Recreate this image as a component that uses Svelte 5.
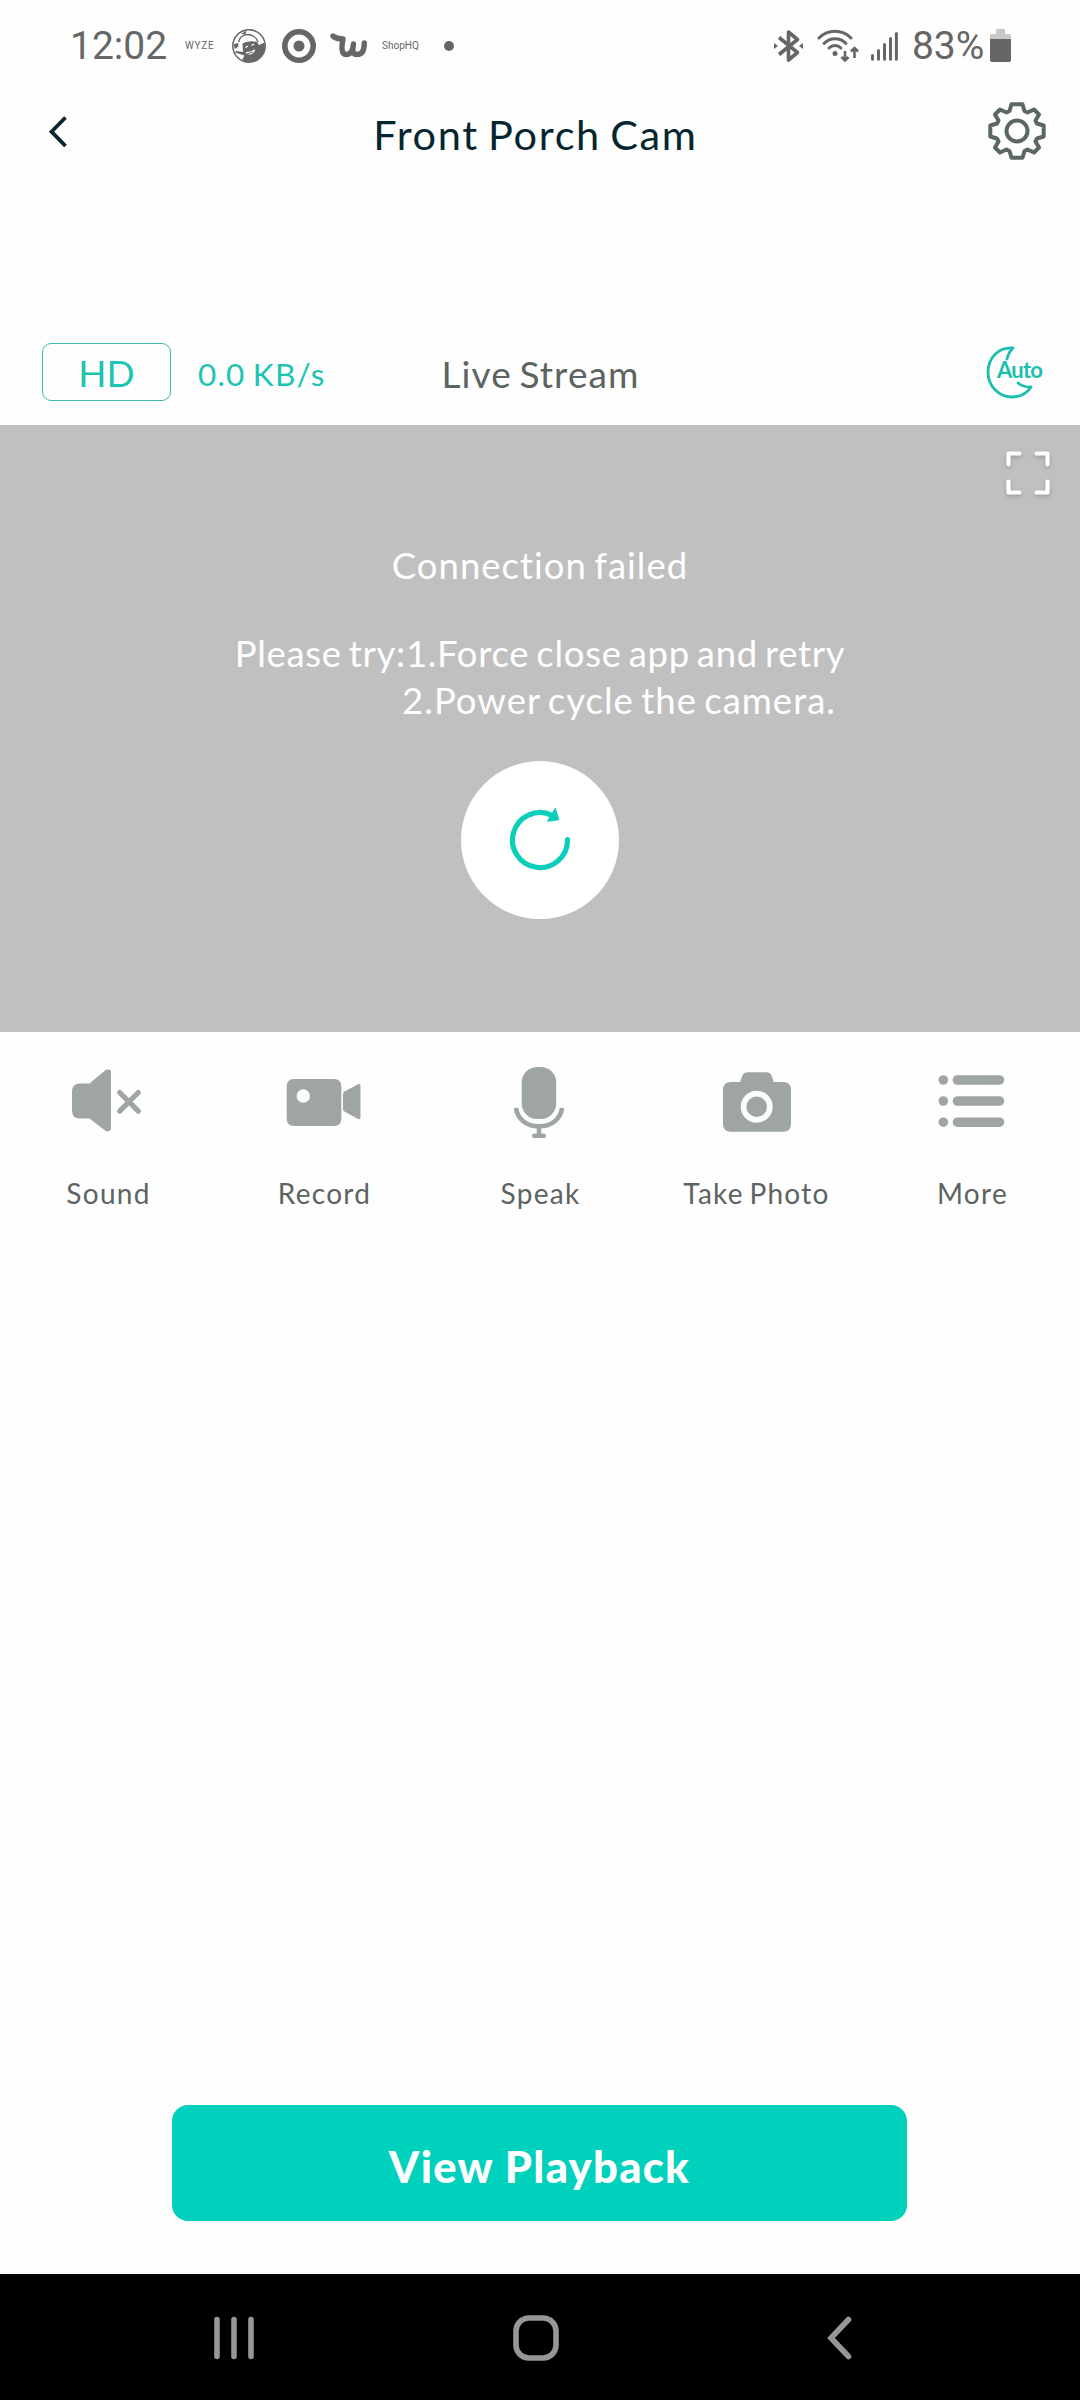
<script lang="ts">
	const title = 'Front Porch Cam';
	const speed = '0.0 KB/s';
	const battery = 83;

	const actions = [
		{ id: 'sound', label: 'Sound' },
		{ id: 'record', label: 'Record' },
		{ id: 'speak', label: 'Speak' },
		{ id: 'photo', label: 'Take Photo' },
		{ id: 'more', label: 'More' }
	];
</script>

<div class="screen">
	<div class="status-bar">
		<span class="clock">12:02</span>
		<span class="wyze">WYZE</span>
		<svg class="avatar" width="34" height="34" viewBox="0 0 34 34">
			<circle cx="17" cy="17" r="16.2" fill="none" stroke="#666" stroke-width="1.5" />
			<path d="M6.5 13C8 6 16 3.5 22 7.5C24.5 9 25.5 11 26 13" fill="none" stroke="#666" stroke-width="1.4" />
			<path d="M9 5L14.5 1.5L13.5 5.5ZM2 15L6 14L6.5 17.5L2.5 20Z" fill="#666" />
			<path d="M10.5 14.5C15 12 21 11.5 25 13L27 16L32.5 13.5L33 18C32 27 25 33 17 33C14 33 12 32 10 31L12.5 26.5L3 23.5L4 22L11 23Z" fill="#666" />
			<path d="M13.5 18.5L16 17M19.5 16.5L22 15" stroke="#fff" stroke-width="1.4" />
			<path d="M13.5 23C17 23.5 20 22 23 20C23 25 16 28 13.5 23Z" fill="#fff" />
			<path d="M15 25L21 23" stroke="#666" stroke-width="1" />
		</svg>
		<svg class="target" width="34" height="34" viewBox="0 0 34 34">
			<circle cx="17" cy="17" r="14.2" fill="none" stroke="#666" stroke-width="5.6" />
			<circle cx="17" cy="17" r="5.5" fill="#666" />
		</svg>
		<svg class="wish" width="38" height="26" viewBox="0 0 38 26">
			<path d="M3 3C6 6 9 5.5 13 6C11.5 13 11 21.5 16 21.5C21 21.5 23 17 23.5 11C22 18 23 21.5 27 21.5C32 21.5 34.3 17 34.3 10" fill="none" stroke="#666" stroke-width="5.4" stroke-linecap="round" stroke-linejoin="round" />
		</svg>
		<span class="shophq">ShopHQ</span>
		<span class="dot"></span>

		<div class="system">
			<svg class="bluetooth" width="30" height="34" viewBox="0 0 30 34">
				<path d="M5 8.5L23.5 23.5L14.5 31V3L23.5 10.5L5 25.5" fill="none" stroke="#666" stroke-width="3.6" stroke-linejoin="round" />
				<path d="M0 14L4 17L0 20ZM29 14L25 17L29 20Z" fill="#666" />
			</svg>
			<svg class="wifi" width="42" height="34" viewBox="0 0 42 34">
				<g fill="none" stroke="#666" stroke-width="3" stroke-linecap="round">
					<path d="M2 9C11 0 25 0 34 9" />
					<path d="M7 14.5C13 8 23 8 29 14.5" />
					<path d="M12 19C15.5 15.5 20.5 15.5 24 19" />
				</g>
				<circle cx="18" cy="24.5" r="2.5" fill="#666" />
				<path d="M28 22V31M24.5 28L28 31.5L31.5 28M37.5 29V20M34 22.5L37.5 19L41 22.5" fill="none" stroke="#666" stroke-width="2.6" />
			</svg>
			<svg class="signal" width="27" height="30" viewBox="0 0 27 30">
				<path d="M1.5 28.3V24.5M7.5 28.3V19.5M13.5 28.3V13.5M19.5 28.3V7.5M25.4 28.3V2.5" stroke="#666" stroke-width="3" stroke-linecap="round" />
			</svg>
			<span class="percent">{battery}%</span>
			<svg class="battery" width="21" height="33" viewBox="0 0 21 33">
				<path d="M6 0H15V5H19.5Q21 5 21 6.5V12H0V6.5Q0 5 1.5 5H6Z" fill="#c8c8c8" />
				<path d="M0 10H21V31Q21 33 19 33H2Q0 33 0 31Z" fill="#666" />
			</svg>
		</div>
	</div>

	<header>
		<button class="icon-button" aria-label="Back">
			<svg width="22" height="34" viewBox="0 0 22 34">
				<path d="M17.5 2.5L3.5 16.7L17.5 31" fill="none" stroke="#06262f" stroke-width="3.8" />
			</svg>
		</button>
		<h1>{title}</h1>
		<button class="icon-button" aria-label="Settings">
			<svg width="60" height="60" viewBox="-30 -30 60 60">
				<g fill="none" stroke="#5b6666" stroke-width="4" stroke-linejoin="round">
					<path d="M-5.5 -26.7H5.5L7.5 -20L10.5 -18.5L17 -21.5L22 -16.5L18.5 -10.5L20 -7.5L26.7 -5.5V5.5L20 7.5L18.5 10.5L22 16.5L17 21.5L10.5 18.5L7.5 20L5.5 26.7H-5.5L-7.5 20L-10.5 18.5L-17 21.5L-22 16.5L-18.5 10.5L-20 7.5L-26.7 5.5V-5.5L-20 -7.5L-18.5 -10.5L-22 -16.5L-17 -21.5L-10.5 -18.5L-7.5 -20Z" />
					<circle r="10.5" />
				</g>
			</svg>
		</button>
	</header>

	<div class="stream-bar">
		<div class="quality">
			<button class="hd">HD</button>
			<span class="speed">{speed}</span>
		</div>
		<span class="stream-title">Live Stream</span>
		<svg class="night" width="60" height="56" viewBox="0 0 60 56">
			<path d="M22 15C23 10.5 25 7 28 4C13 3 3 14 3 28.5C3 42 14 53 26.5 53C35 53 42 49 46 43C41 43.5 37 42 33 39" fill="none" stroke="#1cbfae" stroke-width="2.8" stroke-linecap="round" stroke-linejoin="round" />
			<text x="12" y="34" textLength="46">Auto</text>
		</svg>
	</div>

	<section class="video">
		<svg class="fullscreen" width="48" height="48" viewBox="0 0 48 48">
			<path d="M4.5 15.5V4.5H15.5M32.5 4.5H43.5V15.5M43.5 32.5V43.5H32.5M15.5 43.5H4.5V32.5" fill="none" stroke="#fff" stroke-width="4.2" stroke-linecap="round" stroke-linejoin="round" />
		</svg>
		<p class="failed">Connection failed</p>
		<p class="hint">Please try:1.Force close app and retry</p>
		<p class="hint second">2.Power cycle the camera.</p>
		<button class="retry" aria-label="Retry">
			<svg width="66" height="66" viewBox="-33 -33 66 66">
				<path d="M27.5 -0.5A27.5 27.5 0 1 1 12 -24.7" fill="none" stroke="#0bcfba" stroke-width="5.2" stroke-linecap="round" />
				<path d="M15.2 -31L18.5 -20.5L8 -19Z" fill="#0bcfba" stroke="#0bcfba" stroke-width="1.5" stroke-linejoin="round" />
			</svg>
		</button>
	</section>

	<nav class="actions">
		{#each actions as action (action.id)}
			<button class="action">
				<svg width="80" height="76" viewBox="0 0 80 76" fill="#9fa5a3">
					{#if action.id === 'sound'}
						<path d="M12 21.5H21.5L37 8.500Q39.5 6.5 43 8.5V67.5Q40 71 37 68.5L21.5 56.5H12Q4 56.5 4 48.5V29.5Q4 21.5 12 21.5Z" />
						<path d="M51.7 30.5L70.3 49.1M70.3 30.5L51.7 49.1" stroke="#9fa5a3" stroke-width="5.2" stroke-linecap="round" />
					{:else if action.id === 'record'}
						<path fill-rule="evenodd" d="M10 17H50Q57.3 17 57.3 24.5V56.5Q57.3 64 50 64H10Q2.7 64 2.7 56.5V24.5Q2.7 17 10 17ZM12.6 34A6.7 6.7 0 1 0 26 34A6.7 6.7 0 1 0 12.6 34Z" />
						<path d="M60.5 29.5L74 22.2Q76.5 21.5 76.5 24V55Q76.5 58 74 57L60.5 49.5Q59 48.5 59 47V32Q59 30.5 60.5 29.5Z" />
					{:else if action.id === 'speak'}
						<rect x="21.7" y="5" width="34.5" height="52" rx="15.5" />
						<path d="M16 46C17.5 57 26 64.3 39 64.3S60.5 57 62 46M39 65V74" fill="none" stroke="#9fa5a3" stroke-width="4.6" />
						<path d="M34.3 73.8H43.7" stroke="#9fa5a3" stroke-width="4.6" stroke-linecap="round" />
					{:else if action.id === 'photo'}
						<path fill-rule="evenodd" d="M15 20H24L26 14.5Q27.5 10.3 32 10.3H50Q54.5 10.3 56 14.5L57.7 20H67Q75 20 75 28V61.7Q75 69.7 67 69.7H15Q7 69.7 7 61.7V28Q7 20 15 20ZM24.7 44.7A16 16 0 1 0 56.7 44.7A16 16 0 1 0 24.7 44.7Z" />
						<circle cx="40.7" cy="44.7" r="10.3" />
					{:else}
						{#each [18, 39, 60.2] as y}
							<circle cx="11.3" cy={y} r="4.8" />
							<rect x="20.7" y={y - 4.8} width="51.5" height="9.6" rx="4.8" />
						{/each}
					{/if}
				</svg>
				<span class="label">{action.label}</span>
			</button>
		{/each}
	</nav>

	<div class="footer">
		<button class="playback">View Playback</button>
	</div>

	<div class="nav-bar">
		<svg width="42" height="46" viewBox="0 0 42 46">
			<path d="M4 4.5V41.5M21 4.5V41.5M38 4.5V41.5" stroke="#969696" stroke-width="5.6" stroke-linecap="round" />
		</svg>
		<svg class="home" width="46" height="46" viewBox="0 0 46 46">
			<rect x="3" y="3" width="40" height="40" rx="13" fill="none" stroke="#969696" stroke-width="5.6" />
		</svg>
		<svg width="28" height="46" viewBox="0 0 28 46">
			<path d="M23.5 4.5L6 23L23.5 41.5" fill="none" stroke="#969696" stroke-width="5.6" stroke-linecap="round" />
		</svg>
	</div>
</div>

<style>
	:global(body) {
		margin: 0;
		background: #fefefe;
	}

	.screen {
		display: flex;
		flex-direction: column;
		width: 1080px;
		height: 2400px;
		overflow: hidden;
		background: #fefefe;
		font-family: Lato, "Liberation Sans", sans-serif;
	}

	button {
		padding: 0;
		border: none;
		background: none;
		font-family: inherit;
		cursor: pointer;
	}

	svg {
		display: block;
		flex-shrink: 0;
	}

	.status-bar {
		display: flex;
		align-items: center;
		box-sizing: border-box;
		height: 90px;
		padding: 1px 69px 0 70px;
		color: #666;
		font-family: Roboto, sans-serif;
	}

	.clock {
		width: 115px;
		font-size: 39px;
		line-height: 46px;
	}

	.wyze {
		width: 47px;
		font-size: 10px;
		letter-spacing: 0.7px;
	}

	.target {
		margin-left: 16px;
	}

	.wish {
		margin-left: 14px;
	}

	.shophq {
		width: 62px;
		margin-left: 14px;
		font-size: 10px;
	}

	.dot {
		width: 10px;
		height: 10px;
		border-radius: 50%;
		background: #666;
	}

	.system {
		display: flex;
		align-items: center;
		margin-left: auto;
	}

	.wifi {
		margin-left: 13px;
	}

	.signal {
		margin-left: 12px;
	}

	.percent {
		width: 78px;
		margin-left: 14px;
		font-size: 39px;
		line-height: 46px;
		letter-spacing: -0.1px;
	}

	header {
		display: grid;
		grid-template-columns: 120px 1fr 120px;
		align-items: center;
		height: 84px;
		margin-bottom: 151px;
	}

	header .icon-button {
		display: flex;
		padding-left: 48px;
	}

	header .icon-button:last-child {
		padding: 0 0 2px 27px;
	}

	h1 {
		margin: 4px 9px 0 0;
		color: #06262f;
		font-size: 41.5px;
		font-weight: 400;
		letter-spacing: 1.65px;
		word-spacing: -3px;
		text-align: center;
		white-space: nowrap;
	}

	.stream-bar {
		display: grid;
		grid-template-columns: 1fr auto 1fr;
		align-items: center;
		box-sizing: border-box;
		height: 100px;
		padding: 0 35px 6px 42px;
	}

	.quality {
		display: flex;
		align-items: center;
		gap: 27px;
		color: #1cc4b1;
	}

	.hd {
		box-sizing: border-box;
		width: 129px;
		height: 58px;
		border: 1.5px solid #3fb9ae;
		border-radius: 9px;
		color: #1cc4b1;
		font-size: 37px;
	}

	.speed {
		padding-top: 4px;
		font-size: 31.5px;
		letter-spacing: 1.2px;
		word-spacing: -2px;
		white-space: nowrap;
	}

	.stream-title {
		margin-right: 6px;
		padding-top: 3px;
		color: #5b6461;
		font-size: 37px;
		letter-spacing: 1.1px;
		word-spacing: -3px;
	}

	.night {
		justify-self: end;
	}

	.night text {
		fill: #1cbfae;
		font-family: Lato, sans-serif;
		font-size: 22px;
		font-weight: 700;
	}

	.video {
		position: relative;
		display: flex;
		flex-direction: column;
		align-items: center;
		box-sizing: border-box;
		height: 607px;
		padding-top: 117px;
		background: #c0c0c0;
		color: #fff;
	}

	.fullscreen {
		position: absolute;
		top: 24px;
		right: 28px;
		filter: drop-shadow(0 2px 2px rgba(0, 0, 0, 0.2));
	}

	.video p {
		margin: 0;
		font-size: 36.5px;
		line-height: 47px;
		word-spacing: -3px;
		white-space: nowrap;
	}

	.video .failed {
		margin-bottom: 41px;
		letter-spacing: 1px;
	}

	.video .hint {
		letter-spacing: 0.7px;
	}

	.video .second {
		padding-left: 158px;
		letter-spacing: 1px;
	}

	.retry {
		display: grid;
		place-items: center;
		width: 158px;
		height: 158px;
		margin-top: 37px;
		border-radius: 50%;
		background: #fff;
	}

	.actions {
		display: grid;
		grid-template-columns: repeat(5, 1fr);
	}

	.action {
		display: flex;
		flex-direction: column;
		align-items: center;
		padding-top: 30px;
	}

	.label {
		margin-top: 38px;
		padding-left: 1px;
		color: #5b6461;
		font-size: 28px;
		line-height: 34px;
		letter-spacing: 1.3px;
		word-spacing: -3px;
		white-space: nowrap;
	}

	.footer {
		display: flex;
		justify-content: center;
		margin-top: auto;
		padding: 0 1px 53px 0;
	}

	.playback {
		width: 735px;
		height: 116px;
		padding-top: 6px;
		border-radius: 16px;
		background: #00d1bc;
		color: #fff;
		font-size: 43.5px;
		font-weight: 900;
		letter-spacing: 1.3px;
	}

	.nav-bar {
		display: flex;
		align-items: center;
		justify-content: space-between;
		box-sizing: border-box;
		height: 126px;
		padding: 2px 227px 0 213px;
		background: #000;
	}

	.home {
		margin-right: 8px;
	}
</style>
